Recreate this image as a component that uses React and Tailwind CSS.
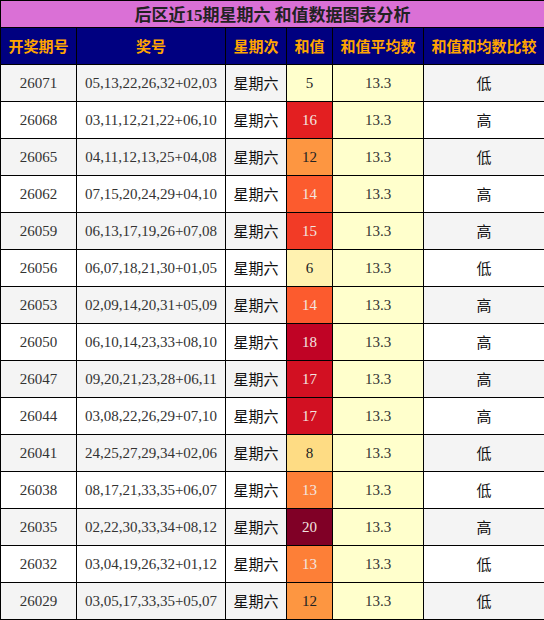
const rows = [
  ["26071", "05,13,22,26,32+02,03", 5, "低"],
  ["26068", "03,11,12,21,22+06,10", 16, "高"],
  ["26065", "04,11,12,13,25+04,08", 12, "低"],
  ["26062", "07,15,20,24,29+04,10", 14, "高"],
  ["26059", "06,13,17,19,26+07,08", 15, "高"],
  ["26056", "06,07,18,21,30+01,05", 6, "低"],
  ["26053", "02,09,14,20,31+05,09", 14, "高"],
  ["26050", "06,10,14,23,33+08,10", 18, "高"],
  ["26047", "09,20,21,23,28+06,11", 17, "高"],
  ["26044", "03,08,22,26,29+07,10", 17, "高"],
  ["26041", "24,25,27,29,34+02,06", 8, "低"],
  ["26038", "08,17,21,33,35+06,07", 13, "低"],
  ["26035", "02,22,30,33,34+08,12", 20, "高"],
  ["26032", "03,04,19,26,32+01,12", 13, "低"],
  ["26029", "03,05,17,33,35+05,07", 12, "低"],
];

// heat colours for the sum column
const heat = {
  5: "bg-[#ffffcc] text-[#222]",
  6: "bg-[#fff2b0] text-[#222]",
  8: "bg-[#fedc84] text-[#222]",
  12: "bg-[#fd9641] text-[#222]",
  13: "bg-[#fd7f37] text-[#f3e6e0]",
  14: "bg-[#fc5b2e] text-[#f3e6e0]",
  15: "bg-[#f23b26] text-[#f3e6e0]",
  16: "bg-[#e31f21] text-[#f3e6e0]",
  17: "bg-[#d21022] text-[#f3e6e0]",
  18: "bg-[#c00325] text-[#f3e6e0]",
  20: "bg-[#800026] text-[#f3e6e0]",
};

const serif = "font-['Liberation_Serif','Noto_Sans_CJK_SC',serif]";
const cjk = "font-['Noto_Sans_CJK_SC',sans-serif]";

export default function App() {
  return (
    <div className="w-[544px] h-[620px] bg-white overflow-hidden">
      <table className="w-[544px] table-fixed border-collapse text-center">
        <colgroup>
          <col className="w-[76px]" />
          <col className="w-[149px]" />
          <col className="w-[61px]" />
          <col className="w-[46px]" />
          <col className="w-[91px]" />
          <col className="w-[121px]" />
        </colgroup>
        <thead>
          <tr className="h-[27px] bg-[#da70d6]">
            <th colSpan={6} className={`border border-black p-0 text-[17px] leading-none font-bold text-[#222] ${cjk}`}>
              后区近<span className={serif}>15</span>期星期六 和值数据图表分析
            </th>
          </tr>
          <tr className="h-[37px] bg-[#000080]">
            {["开奖期号", "奖号", "星期次", "和值", "和值平均数", "和值和均数比较"].map((h) => (
              <th key={h} className={`border border-black p-0 text-[15px] font-bold text-[#ffa500] ${cjk}`}>
                {h}
              </th>
            ))}
          </tr>
        </thead>
        <tbody>
          {rows.map(([no, nums, sum, cmp], i) => {
            const stripe = i % 2 === 0 ? "bg-[#f4f4f4]" : "bg-white";
            return (
              <tr key={no} className={`h-[37px] ${stripe}`}>
                <td className={`border border-black p-0 text-[15px] text-[#333] ${serif}`}>{no}</td>
                <td className={`border border-black p-0 text-[15px] text-[#333] ${serif}`}>{nums}</td>
                <td className={`border border-black p-0 text-[15px] text-[#111] ${cjk}`}>星期六</td>
                <td className={`border border-black p-0 text-[15px] ${serif} ${heat[sum]}`}>{sum}</td>
                <td className={`border border-black p-0 text-[15px] bg-[#ffffcc] text-[#333] ${serif}`}>13.3</td>
                <td className={`border border-black p-0 text-[15px] text-[#111] ${cjk}`}>{cmp}</td>
              </tr>
            );
          })}
        </tbody>
      </table>
    </div>
  );
}
